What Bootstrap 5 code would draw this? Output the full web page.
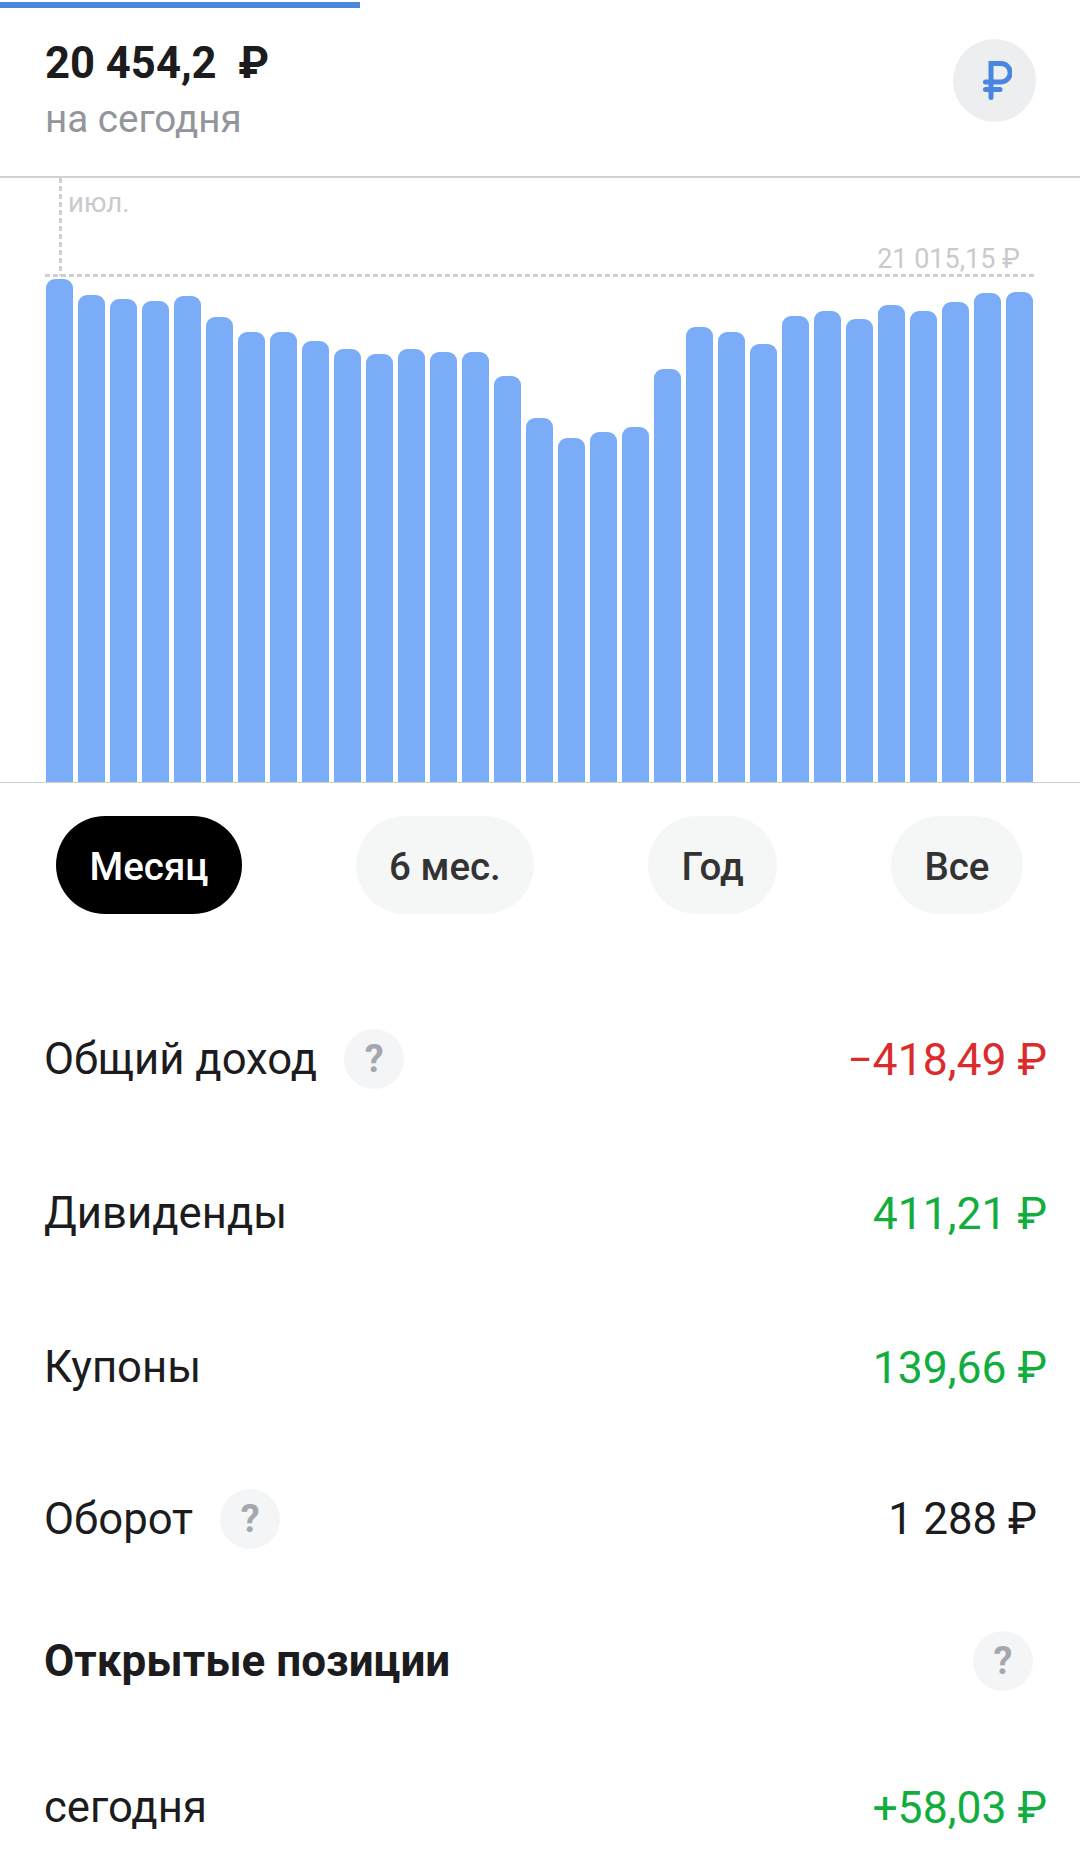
<!DOCTYPE html>
<html lang="ru">
<head>
  <meta charset="UTF-8">
  <title>Портфель</title>
  <meta name="viewport" content="width=device-width, initial-scale=1.0">
  <link rel="stylesheet" href="https://cdn.jsdelivr.net/npm/bootstrap@5.3.0/dist/css/bootstrap.min.css">
  <style>
    body {
      width: 1080px;
      height: 1872px;
      overflow: hidden;
      background: #fff;
      color: #1c1c1e;
      font-family: Roboto, "Liberation Sans", sans-serif;
    }
    .load-line {
      width: 360px;
      height: 6px;
      margin-top: 2px;
      background: #4a86e0;
    }
    .top-head {
      height: 168px;
      padding: 0 44px 0 45px;
    }
    .total-sum {
      font-size: 43.6px;
      font-weight: 700;
      line-height: 48px;
      margin-top: 32px;
    }
    .total-sub {
      font-size: 38.6px;
      line-height: 44px;
      margin-top: 9px;
      color: #92959c;
    }
    .cur-btn {
      width: 83px;
      height: 83px;
      margin-top: 31px;
      border-radius: 50%;
      background: #eceeef;
    }
    .cur-btn svg { margin-left: 6px; }
    .chart-box {
      position: relative;
      height: 607px;
      padding-left: 46px;
      border-top: 2px solid #cfd0d2;
      border-bottom: 1px solid #cfd0d2;
    }
    .chart-bars {
      height: 100%;
      gap: 5px;
    }
    .chart-bar {
      width: 27px;
      background: #7aacf7;
      border-radius: 9px 9px 0 0;
    }
    .chart-vline {
      position: absolute;
      left: 59px;
      top: 0;
      width: 3px;
      height: 98px;
      background: repeating-linear-gradient(to bottom, #cfd0d2 0 5px, transparent 5px 8px);
    }
    .chart-hline {
      position: absolute;
      left: 45px;
      right: 44px;
      top: 96px;
      height: 3px;
      background: repeating-linear-gradient(to right, #cfd0d2 0 5px, transparent 5px 8px);
    }
    .chart-month, .chart-max {
      position: absolute;
      line-height: 30px;
      color: #c9cacd;
    }
    .chart-month { left: 68px; top: 10px; font-size: 27.6px; }
    .chart-max { right: 60px; top: 66px; font-size: 27px; }
    .period-bar {
      padding: 33px 57px 68px 56px;
    }
    .period-btn {
      height: 98px;
      padding: 0 33.5px;
      border-radius: 49px;
      background: #f5f6f6;
      color: #333;
      font-size: 38.5px;
      font-weight: 500;
      line-height: 102px;
    }
    .period-btn.is-active {
      background: #000;
      color: #fff;
    }
    .info-row {
      height: 154px;
      padding: 0 33px 0 44px;
      font-size: 43.7px;
    }
    .info-row.row-head { height: 126px; padding-right: 47px; font-weight: 700; font-size: 44px; }
    .info-row.row-head .row-text { padding-top: 0; }
    .info-row.row-last { height: 130px; margin-top: 18px; }
    .info-row.row-plain { padding-right: 43px; margin-top: -2px; margin-bottom: 2px; }
    .row-text { padding-top: 2px; }
    .val-red { color: #dc2b2b; font-size: 44.5px; }
    .val-green { color: #12ad3f; font-size: 44.5px; }
    .help-dot {
      width: 60px;
      height: 60px;
      margin-left: 27px;
      border-radius: 50%;
      background: #f4f5f6;
      color: #a5a7ae;
      font-size: 38px;
      font-weight: 700;
      line-height: 1;
    }
  </style>
</head>
<body>
  <div class="load-line"></div>

  <div class="top-head d-flex justify-content-between align-items-start">
    <div>
      <div class="total-sum">20 454,2&nbsp; ₽</div>
      <div class="total-sub">на сегодня</div>
    </div>
    <div class="cur-btn d-flex align-items-center justify-content-center">
      <svg width="29" height="39" viewBox="0 0 29 39" fill="none" stroke="#4a86e0" stroke-width="5" stroke-linecap="round">
        <path d="M8 36.5V2.5H18a9.2 9.2 0 0 1 0 18.4H2.5"/>
        <path d="M2.5 28.5H17"/>
      </svg>
    </div>
  </div>

  <div class="chart-box">
    <div class="chart-bars d-flex align-items-end" id="bars"></div>
    <div class="chart-vline"></div>
    <div class="chart-hline"></div>
    <div class="chart-month">июл.</div>
    <div class="chart-max">21 015,15 ₽</div>
  </div>

  <div class="period-bar d-flex justify-content-between">
    <div class="period-btn is-active">Месяц</div>
    <div class="period-btn">6 мес.</div>
    <div class="period-btn">Год</div>
    <div class="period-btn">Все</div>
  </div>

  <div class="info-row d-flex justify-content-between align-items-center">
    <div class="d-flex align-items-center"><span class="row-text">Общий доход</span><span class="help-dot d-flex align-items-center justify-content-center">?</span></div>
    <div class="row-text val-red">−418,49 ₽</div>
  </div>
  <div class="info-row d-flex justify-content-between align-items-center">
    <div class="row-text">Дивиденды</div>
    <div class="row-text val-green">411,21 ₽</div>
  </div>
  <div class="info-row d-flex justify-content-between align-items-center">
    <div class="row-text">Купоны</div>
    <div class="row-text val-green">139,66 ₽</div>
  </div>
  <div class="info-row row-plain d-flex justify-content-between align-items-center">
    <div class="d-flex align-items-center"><span class="row-text">Оборот</span><span class="help-dot d-flex align-items-center justify-content-center">?</span></div>
    <div class="row-text">1 288 ₽</div>
  </div>
  <div class="info-row row-head d-flex justify-content-between align-items-center">
    <div class="row-text">Открытые позиции</div>
    <span class="help-dot d-flex align-items-center justify-content-center">?</span>
  </div>
  <div class="info-row row-last d-flex justify-content-between align-items-center">
    <div class="row-text">сегодня</div>
    <div class="row-text val-green">+58,03 ₽</div>
  </div>

  <script src="https://cdn.jsdelivr.net/npm/bootstrap@5.3.0/dist/js/bootstrap.bundle.min.js"></script>
  <script>
    // верх каждого столбика в пикселях страницы
    const tops = [279, 295, 299, 301, 296, 317, 332, 332, 341, 349, 354, 349, 352, 352, 376, 418, 438, 432, 427, 369, 327, 332, 344, 316, 311, 319, 305, 311, 302, 293, 292];
    const bars = document.getElementById('bars');
    for (const t of tops) {
      const el = document.createElement('div');
      el.className = 'chart-bar';
      el.style.height = (782 - t) + 'px';
      bars.appendChild(el);
    }
  </script>
</body>
</html>
